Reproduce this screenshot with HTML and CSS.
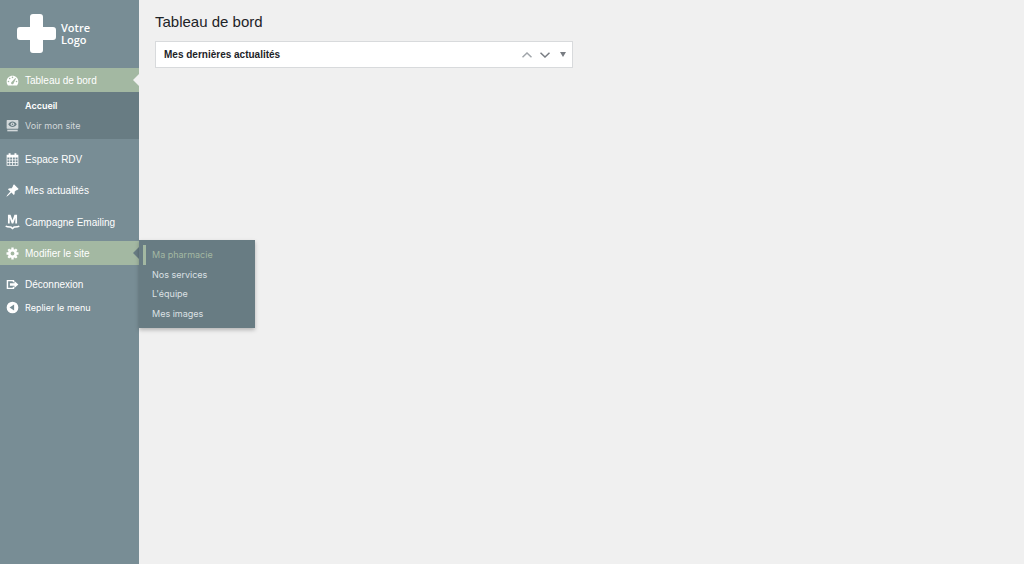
FILE: index.html
```html
<!DOCTYPE html>
<html lang="fr">
<head>
    <meta charset="UTF-8">
    <meta name="viewport" content="width=device-width, initial-scale=1.0">
    <title>Tableau de bord</title>
    <link rel="stylesheet" href="styles.css">
</head>
<body>

    <!-- Menu latéral -->
    <aside class="sidebar">
        <a href="#" class="logo">
            <svg class="logo-cross" viewBox="0 0 39 39" aria-hidden="true">
                <path fill="currentColor" d="M16 0h7q3 0 3 3v10h10q3 0 3 3v7q0 3-3 3H26v10q0 3-3 3h-7q-3 0-3-3V26H3q-3 0-3-3v-7q0-3 3-3h10V3q0-3 3-3z"/>
            </svg>
            <span class="logo-text">Votre<br>Logo</span>
        </a>

        <nav>
            <ul class="menu">
                <li class="menu-item">
                    <a href="#" class="menu-link active current">
                        <svg class="icon" viewBox="0 0 20 20" aria-hidden="true">
                            <path fill="currentColor" fill-rule="evenodd" d="M3 17.500h14c1.300-1.500 2-3.700 2-6C19 6.500 15 2.500 10 2.500s-9 4-9 9c0 2.300.7 4.500 2 6zM10 4a1.200 1.200 0 1 1 0 2.400A1.200 1.200 0 0 1 10 4zM5.700 5.800a1.200 1.200 0 1 1 0 2.400 1.200 1.200 0 0 1 0-2.400zm8.700.2.900.8-3.500 7.400a2 2 0 1 1-2.700-2.200zM3.800 10.200a1.200 1.200 0 1 1 0 2.400 1.200 1.200 0 0 1 0-2.400zm12.400 0a1.200 1.200 0 1 1 0 2.400 1.200 1.200 0 0 1 0-2.400z"/>
                        </svg>
                        Tableau de bord
                    </a>
                    <ul class="submenu">
                        <li><a href="#" class="submenu-link selected">Accueil</a></li>
                        <li>
                            <a href="#" class="submenu-link with-icon">
                                <svg class="icon" viewBox="0 0 20 20" aria-hidden="true">
                                    <path fill="currentColor" fill-rule="evenodd" d="M2 1.500h16q1 0 1 1V14q0 1-1 1H2q-1 0-1-1V2.500q0-1 1-1zM3.500 8c3 5.600 10 5.600 13 0-3-5.600-10-5.600-13 0z"/>
                                    <circle cx="10" cy="8" r="2.800" fill="currentColor"/>
                                    <circle cx="10" cy="8" r="1.200" fill="#687c83"/>
                                    <path fill="currentColor" d="M2 16.500h16V19H2z"/>
                                </svg>
                                Voir mon site
                            </a>
                        </li>
                    </ul>
                </li>
            </ul>

            <ul class="menu">
                <li class="menu-item">
                    <a href="#" class="menu-link">
                        <svg class="icon" viewBox="0 0 20 20" aria-hidden="true">
                            <path fill="currentColor" fill-rule="evenodd" d="M1 2.500h3V.2h3v2.300h6V.2h3v2.300h3v17H1zm1.200 4.500v3h3V7zm4.200 0v3h3V7zm4.200 0v3h3V7zm4.200 0v3h3V7zM2.200 11v3h3v-3zm4.200 0v3h3v-3zm4.200 0v3h3v-3zm4.200 0v3h3v-3zM2.200 15v3.300h3V15zm4.200 0v3.300h3V15zm4.200 0v3.300h3V15zm4.200 0v3.300h3V15z"/>
                        </svg>
                        Espace RDV
                    </a>
                </li>
                <li class="menu-item">
                    <a href="#" class="menu-link">
                        <svg class="icon" viewBox="0 0 20 20" aria-hidden="true">
                            <path fill="currentColor" d="M10.400 3.100l1.900-2.600 7.200 7.200-2.600 1.900c-1-.2-1.400 0-2 .6l-1.700 1.700c.6 2 .2 3.800-1.200 5.200L8.400 13.200 3 18l-2.500 1.500L2 17l4.800-5.400L2.900 8c1.400-1.400 3.200-1.800 5.200-1.200l1.700-1.700c.6-.6.8-1 .6-2z"/>
                        </svg>
                        Mes actualités
                    </a>
                </li>
            </ul>

            <ul class="menu">
                <li class="menu-item">
                    <a href="#" class="menu-link">
                        <svg class="icon" viewBox="0 0 20 20" aria-hidden="true">
                            <path fill="currentColor" d="M3 11.500V-2h4l3 8.500L13 -2h4v13.500h-2.700V3L11.200 11.500H8.800L5.700 3v8.500z"/>
                            <path fill="none" stroke="currentColor" stroke-width="2.400" d="M-.5 15.500c3 1.500 6 1.300 8 1.500l2.500 2.200 2.500-2.200c2-.2 5 0 8-1.500"/>
                        </svg>
                        Campagne Emailing
                    </a>
                </li>
                <li class="menu-item">
                    <a href="#" class="menu-link active open">
                        <svg class="icon" viewBox="0 0 20 20" aria-hidden="true">
                            <g fill="none" stroke="currentColor">
                                <circle cx="10" cy="10" r="5" stroke-width="4"/>
                                <path stroke-width="3.600" d="M10 .8v3M10 16.200v3M.8 10h3M16.200 10h3M3.500 3.500l2 2M14.500 14.500l2 2M16.500 3.500l-2 2M5.500 14.500l-2 2"/>
                            </g>
                        </svg>
                        Modifier le site
                    </a>
                    <!-- Sous-menu affiché à droite -->
                    <ul class="flyout">
                        <li><a href="#" class="flyout-link hovered">Ma pharmacie</a></li>
                        <li><a href="#" class="flyout-link">Nos services</a></li>
                        <li><a href="#" class="flyout-link">L'équipe</a></li>
                        <li><a href="#" class="flyout-link">Mes images</a></li>
                    </ul>
                </li>
                <li class="menu-item">
                    <a href="#" class="menu-link">
                        <svg class="icon" viewBox="0 0 20 20" aria-hidden="true">
                            <path fill="none" stroke="currentColor" stroke-width="2.200" d="M11.500 6.500V4H2.200v12h9.300v-2.500"/>
                            <path fill="currentColor" d="M6 8.200h7V4.500l6 5.500-6 5.500v-3.700H6z"/>
                        </svg>
                        Déconnexion
                    </a>
                </li>
            </ul>

            <button type="button" class="collapse">
                <svg class="icon" viewBox="0 0 20 20" aria-hidden="true">
                    <path fill="currentColor" fill-rule="evenodd" d="M10 1a9 9 0 1 1 0 18 9 9 0 0 1 0-18zm2.500 4.500L5.500 10l7 4.500z"/>
                </svg>
                Replier le menu
            </button>
        </nav>
    </aside>

    <!-- Contenu -->
    <main class="content">
        <h1>Tableau de bord</h1>

        <section class="postbox">
            <h2>Mes dernières actualités</h2>
            <div class="postbox-actions">
                <button type="button" class="muted" aria-label="Monter">
                    <svg width="10" height="6" viewBox="0 0 10 6"><path fill="none" stroke="currentColor" stroke-width="1.500" d="M.5 5.200 5 1l4.500 4.200"/></svg>
                </button>
                <button type="button" aria-label="Descendre">
                    <svg width="10" height="6" viewBox="0 0 10 6"><path fill="none" stroke="currentColor" stroke-width="1.500" d="M.5.800 5 5 9.500.800"/></svg>
                </button>
                <button type="button" aria-label="Ouvrir ou fermer">
                    <svg width="6" height="5" viewBox="0 0 6 5"><path fill="currentColor" d="M0 0h6L3 5z"/></svg>
                </button>
            </div>
        </section>
    </main>

</body>
</html>
```
FILE: styles.css
```css
* {
    box-sizing: border-box;
}

body {
    margin: 0;
    min-height: 100vh;
    display: flex;
    background-color: #f0f0f0;
    color: #1d2327;
    font-family: "Liberation Sans", Arial, sans-serif;
    font-size: 10px;
}

ul {
    list-style: none;
    margin: 0;
    padding: 0;
}

a {
    color: inherit;
    text-decoration: none;
}

button {
    padding: 0;
    border: none;
    background: none;
    color: inherit;
    font: inherit;
    cursor: pointer;
}

/* Menu latéral */
.sidebar {
    flex: none;
    width: 139px;
    background-color: #788d95;
    color: #fff;
}

.logo {
    display: flex;
    align-items: center;
    gap: 5px;
    height: 67px;
    margin-bottom: 1px;
    padding-left: 17px;
}

.logo-cross {
    width: 39px;
    height: 39px;
}

.logo-text {
    font-family: "Open Sans", sans-serif;
    font-size: 11px;
    font-weight: 600;
    line-height: 12px;
}

.menu {
    display: flex;
    flex-direction: column;
    gap: 7px;
    margin-bottom: 8px;
}

.menu:last-of-type {
    margin-bottom: 0;
}

.menu-item {
    position: relative;
}

.menu-link,
.collapse {
    display: flex;
    align-items: center;
    gap: 6px;
    width: 100%;
    height: 24px;
    padding-left: 6px;
}

.collapse {
    height: 22px;
    font-family: Inter, sans-serif;
    font-size: 9px;
}

.icon {
    flex: none;
    width: 13px;
    height: 13px;
    overflow: visible;
}

.menu-link.active {
    position: relative;
    background-color: #a3b8a2;
}

/* Petite flèche au bord droit */
.menu-link.active::after {
    content: "";
    position: absolute;
    right: 0;
    top: 6px;
    border: 6px solid transparent;
    border-left: none;
    border-right-color: #f0f0f0;
}

.menu-link.open::after {
    border-right-color: #687c83;
}

.submenu {
    padding: 3px 0 4px;
    background-color: #687c83;
}

.submenu-link {
    display: flex;
    align-items: center;
    gap: 6px;
    height: 20px;
    padding-left: 25px;
    font-family: Inter, sans-serif;
    font-size: 9px;
    color: #d2d8da;
}

.submenu-link.with-icon {
    padding-left: 6px;
}

.submenu-link.selected {
    color: #fff;
    font-weight: 600;
}

.flyout {
    position: absolute;
    left: 100%;
    top: -1px;
    z-index: 1;
    display: flex;
    flex-direction: column;
    width: 116px;
    height: 88px;
    padding: 5px 0;
    background-color: #687c83;
    box-shadow: 0 2px 4px rgba(0, 0, 0, 0.25);
}

.flyout li {
    flex: 1;
    display: flex;
}

.flyout-link {
    flex: 1;
    display: flex;
    align-items: center;
    margin-left: 4px;
    padding-left: 9px;
    font-family: Inter, sans-serif;
    font-size: 9px;
    color: #dce1e3;
}

.flyout-link.hovered {
    color: #a3b8a2;
    box-shadow: inset 3px 0 0 #a3b8a2;
}

/* Contenu */
.content {
    flex: 1;
    padding: 12px 16px;
}

h1 {
    margin: 0 0 9px;
    font-size: 15px;
    font-weight: 400;
    line-height: 20px;
}

.postbox {
    display: flex;
    align-items: center;
    justify-content: space-between;
    width: 49%;
    height: 27px;
    padding: 0 5px 0 8px;
    border: 1px solid #d8dadc;
    background-color: #fff;
}

.postbox h2 {
    margin: 0;
    font-size: 10px;
    font-weight: 700;
}

.postbox-actions {
    display: flex;
    color: #787c82;
}

.postbox-actions button {
    display: flex;
    align-items: center;
    justify-content: center;
    width: 18px;
    height: 24px;
}

.postbox-actions button:last-child {
    width: 8px;
    margin-left: 5px;
}

.postbox-actions .muted {
    color: #a0a5aa;
}
```
